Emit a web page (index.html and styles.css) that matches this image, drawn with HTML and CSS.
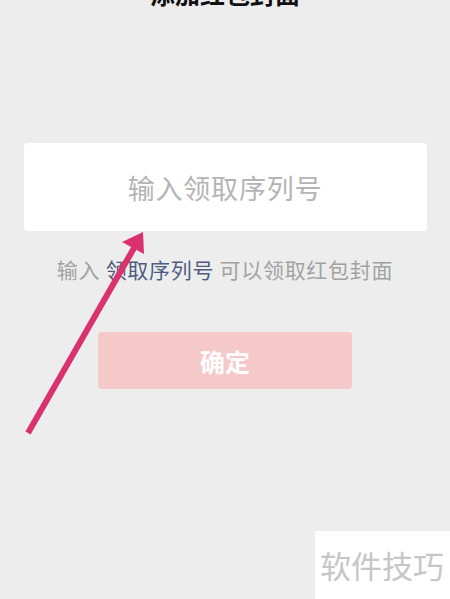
FILE: index.html
```html
<!DOCTYPE html>
<html lang="zh-CN">
<head>
<meta charset="utf-8">
<link rel="stylesheet" href="styles.css">
</head>
<body>
<div class="page">
  <h1 class="title">添加红包封面</h1>
  <div class="input-card"><span class="placeholder">输入领取序列号</span></div>
  <p class="hint">输入 <span class="link">领取序列号</span> 可以领取红包封面</p>
  <button class="confirm">确定</button>
</div>
<svg class="arrow" width="450" height="599" viewBox="0 0 450 599">
  <line x1="28" y1="433" x2="134" y2="248" stroke="#d9326c" stroke-width="6"/>
  <polygon points="143,232 122,242 144,254" fill="#d9326c"/>
</svg>
<div class="watermark">软件技巧</div>
</body>
</html>
```
FILE: styles.css
```css
html, body {
  margin: 0;
  padding: 0;
  background: #ededed;
  overflow: hidden;
}
body {
  width: 450px;
  height: 599px;
  position: relative;
  font-family: "Noto Sans CJK SC", "Noto Sans", sans-serif;
}
.page {
  display: flex;
  flex-direction: column;
  align-items: center;
}
.title {
  margin: -22px 0 0;
  font-size: 25px;
  line-height: 30px;
  font-weight: 700;
  color: #111;
}
.input-card {
  margin-top: 135px;
  width: 403px;
  height: 88px;
  background: #fff;
  border-radius: 4px;
  display: flex;
  align-items: center;
  justify-content: center;
}
.placeholder {
  font-size: 27px;
  color: #b4b4b4;
  letter-spacing: 0.8px;
}
.hint {
  margin: 23px 0 0;
  font-size: 21px;
  line-height: 30px;
  color: #a2a2a2;
  letter-spacing: 0.7px;
}
.link {
  color: #4e5c82;
}
.confirm {
  margin-top: 48px;
  width: 254px;
  height: 57px;
  border: none;
  border-radius: 4px;
  background: #f6c9c9;
  color: #fff;
  font-family: "Noto Sans CJK SC", sans-serif;
  font-size: 25px;
  font-weight: 700;
}
.arrow {
  position: absolute;
  left: 0;
  top: 0;
  pointer-events: none;
}
.watermark {
  position: absolute;
  left: 315px;
  top: 531px;
  width: 135px;
  height: 68px;
  background: #fff;
  color: #c6c6c6;
  font-size: 31px;
  line-height: 68px;
  padding-left: 5px;
  box-sizing: border-box;
  white-space: nowrap;
}
```
